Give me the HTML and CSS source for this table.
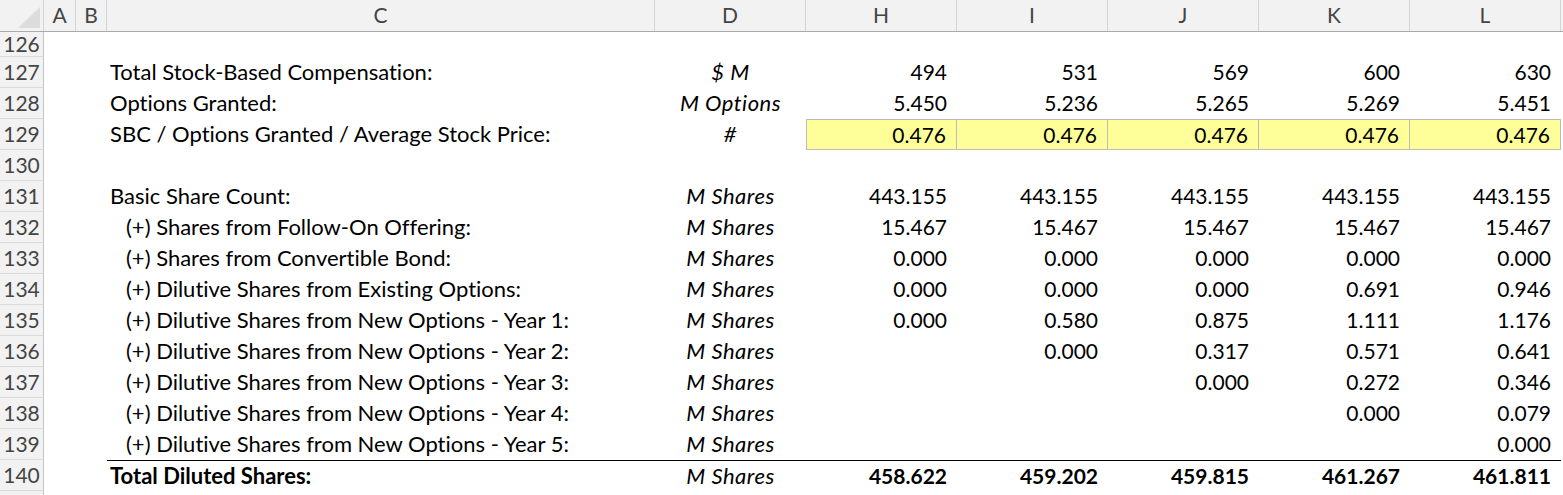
FILE: index.html
```html
<!DOCTYPE html>
<html>
<head>
<meta charset="utf-8">
<link rel="stylesheet" href="styles.css">
</head>
<body>
<div class="sheet">
  <div class="row hdr">
    <div class="corner"><svg width="44" height="31" viewBox="0 0 44 31"><polygon points="40,7 40,28 18,28" fill="#dcdcdc"/></svg></div>
    <div class="ch">A</div><div class="ch">B</div><div class="ch">C</div><div class="ch">D</div>
    <div class="ch">H</div><div class="ch">I</div><div class="ch">J</div><div class="ch">K</div><div class="ch">L</div><div class="ch last"></div>
  </div>
  <div class="row short"><div class="rn">126</div></div>
  <div class="row"><div class="rn">127</div><div></div><div></div><div class="c">Total Stock-Based Compensation:</div><div class="d">$ M</div><div class="n">494</div><div class="n">531</div><div class="n">569</div><div class="n">600</div><div class="n">630</div></div>
  <div class="row"><div class="rn">128</div><div></div><div></div><div class="c">Options Granted:</div><div class="d">M Options</div><div class="n">5.450</div><div class="n">5.236</div><div class="n">5.265</div><div class="n">5.269</div><div class="n">5.451</div></div>
  <div class="row"><div class="rn">129</div><div></div><div></div><div class="c">SBC / Options Granted / Average Stock Price:</div><div class="d">#</div><div class="n y first">0.476</div><div class="n y">0.476</div><div class="n y">0.476</div><div class="n y">0.476</div><div class="n y">0.476</div></div>
  <div class="row"><div class="rn">130</div></div>
  <div class="row"><div class="rn">131</div><div></div><div></div><div class="c">Basic Share Count:</div><div class="d">M Shares</div><div class="n">443.155</div><div class="n">443.155</div><div class="n">443.155</div><div class="n">443.155</div><div class="n">443.155</div></div>
  <div class="row"><div class="rn">132</div><div></div><div></div><div class="c ind">(+) Shares from Follow-On Offering:</div><div class="d">M Shares</div><div class="n">15.467</div><div class="n">15.467</div><div class="n">15.467</div><div class="n">15.467</div><div class="n">15.467</div></div>
  <div class="row"><div class="rn">133</div><div></div><div></div><div class="c ind">(+) Shares from Convertible Bond:</div><div class="d">M Shares</div><div class="n">0.000</div><div class="n">0.000</div><div class="n">0.000</div><div class="n">0.000</div><div class="n">0.000</div></div>
  <div class="row"><div class="rn">134</div><div></div><div></div><div class="c ind">(+) Dilutive Shares from Existing Options:</div><div class="d">M Shares</div><div class="n">0.000</div><div class="n">0.000</div><div class="n">0.000</div><div class="n">0.691</div><div class="n">0.946</div></div>
  <div class="row"><div class="rn">135</div><div></div><div></div><div class="c ind">(+) Dilutive Shares from New Options - Year 1:</div><div class="d">M Shares</div><div class="n">0.000</div><div class="n">0.580</div><div class="n">0.875</div><div class="n">1.111</div><div class="n">1.176</div></div>
  <div class="row"><div class="rn">136</div><div></div><div></div><div class="c ind">(+) Dilutive Shares from New Options - Year 2:</div><div class="d">M Shares</div><div class="n"></div><div class="n">0.000</div><div class="n">0.317</div><div class="n">0.571</div><div class="n">0.641</div></div>
  <div class="row"><div class="rn">137</div><div></div><div></div><div class="c ind">(+) Dilutive Shares from New Options - Year 3:</div><div class="d">M Shares</div><div class="n"></div><div class="n"></div><div class="n">0.000</div><div class="n">0.272</div><div class="n">0.346</div></div>
  <div class="row"><div class="rn">138</div><div></div><div></div><div class="c ind">(+) Dilutive Shares from New Options - Year 4:</div><div class="d">M Shares</div><div class="n"></div><div class="n"></div><div class="n"></div><div class="n">0.000</div><div class="n">0.079</div></div>
  <div class="row"><div class="rn">139</div><div></div><div></div><div class="c ind">(+) Dilutive Shares from New Options - Year 5:</div><div class="d">M Shares</div><div class="n"></div><div class="n"></div><div class="n"></div><div class="n"></div><div class="n">0.000</div></div>
  <div class="row total"><div class="rn">140</div><div></div><div></div><div class="c b tt">Total Diluted Shares:</div><div class="d tt">M Shares</div><div class="n b tt">458.622</div><div class="n b tt">459.202</div><div class="n b tt">459.815</div><div class="n b tt">461.267</div><div class="n b tt">461.811</div></div>
  <div class="row"><div class="rn"></div></div>
</div>
</body>
</html>
```
FILE: styles.css
```css
html, body {
  margin: 0;
  padding: 0;
  background: #ffffff;
}
body {
  font-family: Lato, "Liberation Sans", sans-serif;
  font-size: 21px;
  color: #000;
  font-variant-ligatures: none;
}
.sheet {
  width: 1563px;
  height: 495px;
  overflow: hidden;
}
.row {
  display: grid;
  grid-template-columns: 44px 32px 31px 548px 151px repeat(5, 151px) 1fr;
  height: 31px;
  line-height: 30px;
  white-space: nowrap;
}
.row > div {
  box-sizing: border-box;
  height: 31px;
}
.hdr {
  height: 32px;
  background: #f2f2f2;
  border-bottom: 1px solid #ababab;
  box-sizing: border-box;
  color: #444;
}
.hdr > div {
  height: 31px;
}
.corner {
  border-right: 1px solid #d4d4d4;
}
.corner svg {
  display: block;
}
.ch {
  text-align: center;
  border-right: 1px solid #d4d4d4;
  line-height: 30px;
}
.ch.last {
  border-right: none;
}
.short {
  height: 25px;
}
.short > div {
  height: 25px;
  line-height: 24px;
}
.rn {
  background: #f2f2f2;
  border-right: 1px solid #c4c4c4;
  border-bottom: 1px solid #dadada;
  color: #444;
  text-align: center;
}
.c {
  padding-left: 3px;
  font-size: 22px;
}
.ind {
  padding-left: 19px;
}
.d {
  text-align: center;
  font-style: italic;
  font-size: 22px;
  letter-spacing: 0.5px;
}
.n {
  text-align: right;
  padding-right: 10px;
}
.b {
  font-weight: bold;
}
.y {
  background: #ffff99;
  border-top: 1px solid #bcbcbc;
  border-bottom: 1px solid #bcbcbc;
  border-right: 1px solid #bcbcbc;
}
.y.first {
  border-left: 1px solid #bcbcbc;
}
.tt {
  border-top: 1px solid #000;
}
```
